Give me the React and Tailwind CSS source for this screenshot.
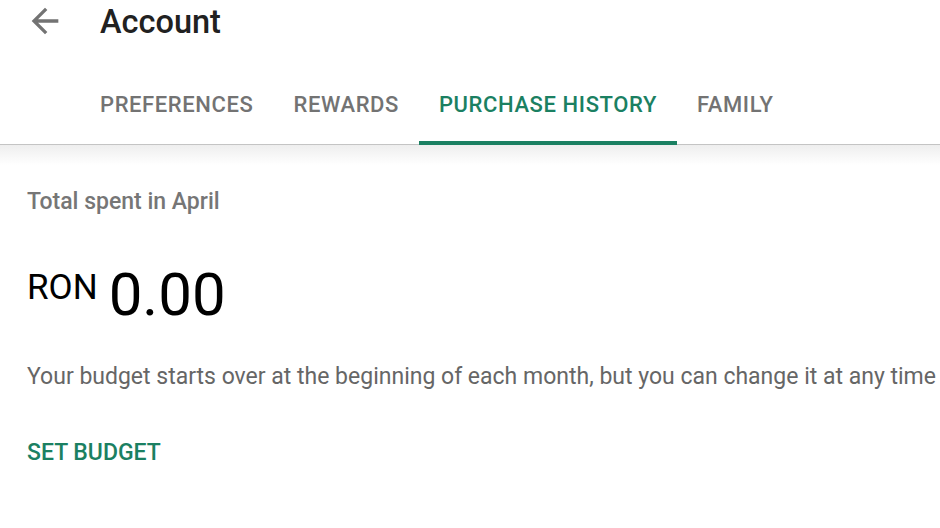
import React from "react";

const tabs = ["PREFERENCES", "REWARDS", "PURCHASE HISTORY", "FAMILY"];

export default function App() {
  return (
    <div className="w-[940px] h-[528px] bg-white overflow-hidden" style={{ fontFamily: "Roboto, 'Noto Sans', sans-serif" }}>
      <div className="h-[64px] flex items-start pt-[2px]">
        <div className="w-[100px] flex items-center h-[40px] pl-[25px]">
          <svg width="40" height="40" viewBox="0 0 24 24" className="-mt-[2px]">
            <path d="M20 11H7.83l5.59-5.59L12 4l-8 8 8 8 1.41-1.41L7.83 13H20v-2z" fill="#737373" />
          </svg>
        </div>
        <div className="text-[32.5px] leading-[40px] font-medium text-[#212121]">Account</div>
      </div>
      <div className="flex pl-[80px] border-b border-[#c4c4c4]">
        {tabs.map((t, i) => (
          <div
            key={t}
            className={
              "relative px-5 pt-[29px] pb-[27px] text-[22px] leading-[24px] font-medium tracking-[0.6px] " +
              (i === 2 ? "text-[#1b8062]" : "text-[#737373]")
            }
          >
            {t}
            {i === 2 && <div className="absolute left-0 right-0 -bottom-[1px] h-[4px] bg-[#1b8062]" />}
          </div>
        ))}
      </div>
      <div className="h-[20px] bg-gradient-to-b from-[#eeeeee] to-white" />
      <div className="px-[27px]">
        <div className="mt-[23px] text-[23px] leading-[28px] font-medium text-[#767676]">Total spent in April</div>
        <div className="mt-[49px] flex items-start text-black">
          <span className="mt-[5px] text-[35px] leading-none">RON</span>
          <span className="ml-[11px] text-[60px] leading-none">0.00</span>
        </div>
        <div className="mt-[38px] text-[23px] leading-[28px] text-[#666666] whitespace-nowrap">
          Your budget starts over at the beginning of each month, but you can change it at any time
        </div>
        <div className="mt-[48px] text-[23px] leading-[28px] font-medium text-[#1b8062]">SET BUDGET</div>
      </div>
    </div>
  );
}
